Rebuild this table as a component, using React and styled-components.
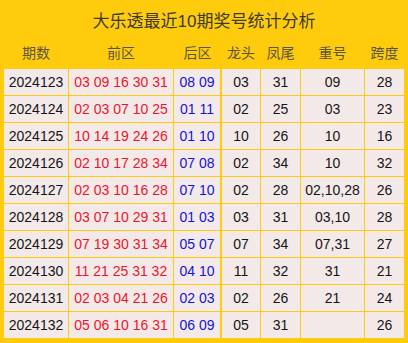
import React from "react";
import styled, { createGlobalStyle } from "styled-components";

const Global = createGlobalStyle`
  html, body { margin: 0; padding: 0; background: #fff; }
  body { font-family: "Liberation Sans", "Noto Sans CJK SC", sans-serif; }
`;

const YELLOW = "#ffcc0d";

const Board = styled.div`
  width: 408px;
  box-sizing: border-box;
  background: ${YELLOW};
  padding: 0 4px 5px 4px;
`;

const Title = styled.div`
  height: 37px;
  display: flex;
  align-items: center;
  justify-content: center;
  font-family: "Liberation Sans", "Noto Sans CJK SC", sans-serif;
  font-size: 17px;
  color: #3d3a33;
  padding-top: 1px;
  box-sizing: border-box;
`;

const Grid = styled.div`
  display: grid;
  grid-template-columns: 64px 104px 47px 38px 39px 63px 39px;
  grid-template-rows: 31px;
  grid-auto-rows: 26px;
  gap: 1px;
`;

const Head = styled.div`
  display: flex;
  align-items: center;
  justify-content: center;
  font-family: "Noto Sans CJK SC", sans-serif;
  font-size: 14px;
  color: #5b5544;
  background: ${YELLOW};
  padding-bottom: 1px;
  box-sizing: border-box;
`;

const Cell = styled.div`
  display: flex;
  align-items: center;
  justify-content: center;
  background: #f3e9e9;
  font-size: 14px;
  color: ${(p) => (p.$tone === "red" ? "#e8172c" : p.$tone === "blue" ? "#1414d6" : "#151515")};
  box-sizing: border-box;
  white-space: nowrap;
  ${(p) => (p.$split ? `border-right: 1px solid ${YELLOW};` : "")}
`;

const heads = ["期数", "前区", "后区", "龙头", "凤尾", "重号", "跨度"];

const rows = [
  ["2024123", "03 09 16 30 31", "08 09", "03", "31", "09", "28"],
  ["2024124", "02 03 07 10 25", "01 11", "02", "25", "03", "23"],
  ["2024125", "10 14 19 24 26", "01 10", "10", "26", "10", "16"],
  ["2024126", "02 10 17 28 34", "07 08", "02", "34", "10", "32"],
  ["2024127", "02 03 10 16 28", "07 10", "02", "28", "02,10,28", "26"],
  ["2024128", "03 07 10 29 31", "01 03", "03", "31", "03,10", "28"],
  ["2024129", "07 19 30 31 34", "05 07", "07", "34", "07,31", "27"],
  ["2024130", "11 21 25 31 32", "04 10", "11", "32", "31", "21"],
  ["2024131", "02 03 04 21 26", "02 03", "02", "26", "21", "24"],
  ["2024132", "05 06 10 16 31", "06 09", "05", "31", "", "26"],
];

export default function App() {
  return (
    <>
      <Global />
      <Board>
        <Title>大乐透最近10期奖号统计分析</Title>
        <Grid>
          {heads.map((h) => (
            <Head key={h}>{h}</Head>
          ))}
          {rows.map((r) => (
            <React.Fragment key={r[0]}>
              <Cell>{r[0]}</Cell>
              <Cell $tone="red">{r[1]}</Cell>
              <Cell $tone="blue" $split>{r[2]}</Cell>
              <Cell>{r[3]}</Cell>
              <Cell>{r[4]}</Cell>
              <Cell>{r[5]}</Cell>
              <Cell>{r[6]}</Cell>
            </React.Fragment>
          ))}
        </Grid>
      </Board>
    </>
  );
}
